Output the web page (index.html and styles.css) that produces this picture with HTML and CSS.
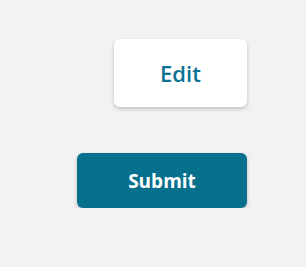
FILE: index.html
```html
<!DOCTYPE html>
<html lang="en">
  <head>
    <meta charset="UTF-8" />
    <meta name="viewport" content="width=device-width, initial-scale=1.0" />
    <title>Buttons</title>
    <link rel="stylesheet" href="styles.css">
  </head>
  <body>
    <div class="container">
      <button class="btn-edit">Edit</button>
      <button class="btn-submit">Submit</button>
    </div>
  </body>
</html>
```

FILE: styles.css
```css
body {
  font-family: "Open Sans", Arial, sans-serif;
  background-color: #f2f2f2;
  margin: 0;
  padding: 0;
}

.container {
  display: flex;
  flex-direction: column;
  align-items: flex-end;
  gap: 46px;
  padding: 39px 59px 0 0;
}

button {
  font-family: "Open Sans", Arial, sans-serif;
  border: none;
  border-radius: 6px;
  cursor: pointer;
  box-shadow: 0 2px 4px rgba(0, 0, 0, 0.2);
}

.btn-edit {
  width: 133px;
  height: 68px;
  background-color: #ffffff;
  color: #0b7391;
  font-size: 22px;
  font-weight: 600;
}

.btn-submit {
  width: 170px;
  height: 55px;
  background-color: #07708d;
  color: #ffffff;
  font-size: 19px;
  font-weight: 700;
}
```
